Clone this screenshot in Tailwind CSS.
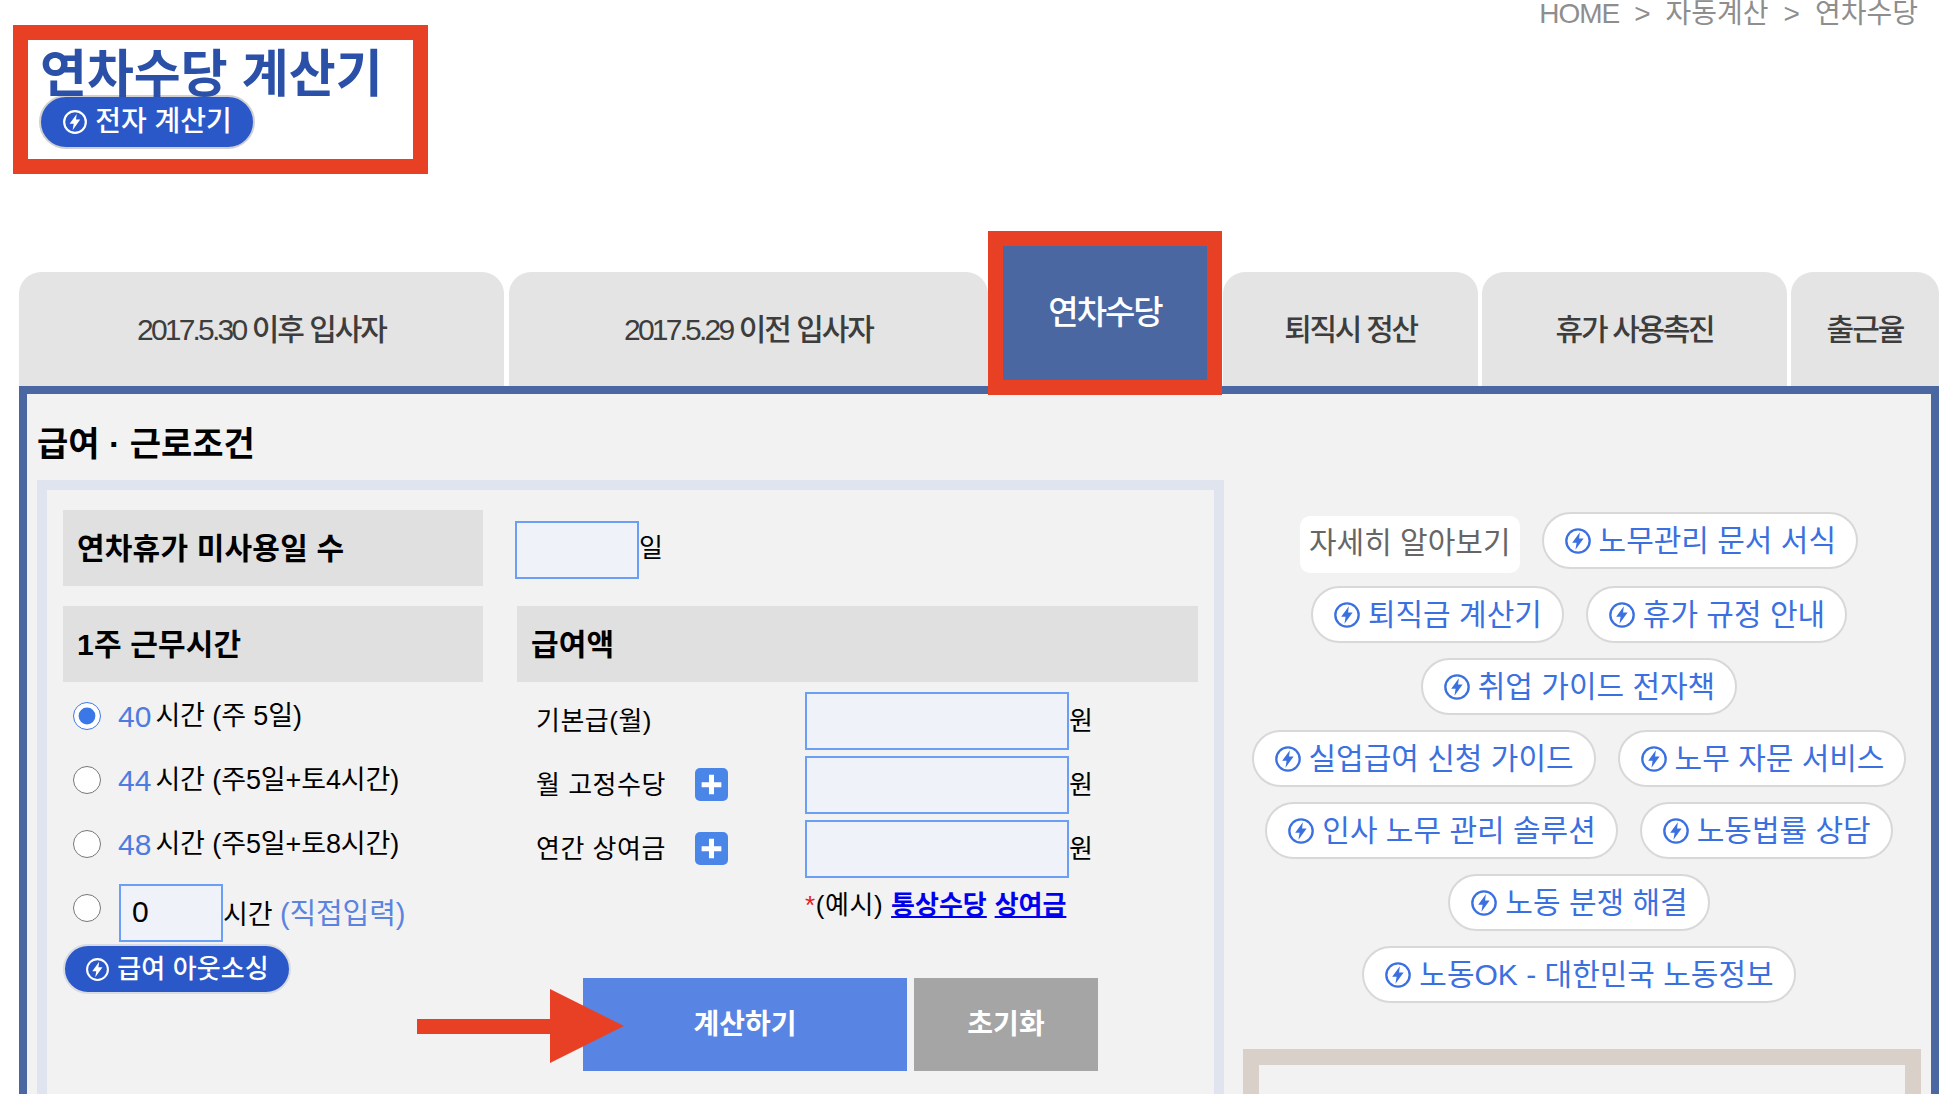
<!DOCTYPE html>
<html lang="ko">
<head>
<meta charset="utf-8">
<title>연차수당 계산기</title>
<script src="https://cdn.jsdelivr.net/npm/@tailwindcss/browser@4"></script>
</head>
<body class="w-[1956px] h-[1094px] overflow-hidden bg-white font-['Liberation_Sans','Noto_Sans_CJK_KR',sans-serif] text-black">

<svg class="hidden">
    <symbol id="bolt" viewBox="0 0 24 24">
        <circle cx="12" cy="12" r="10" fill="none" stroke="currentColor" stroke-width="2"/>
        <path fill="currentColor" d="M13.6 4.5 7 13.6h3.8l-1 5.9 7-9.7h-3.9z"/>
    </symbol>
</svg>

<!-- Header -->
<div class="flex justify-between items-start h-[231px]">
    <div class="ml-[13px] mt-[25px] w-[415px] h-[149px] border-[15px] border-[#e84024] pl-[12px] pt-[10px]">
        <h1 class="text-[51px] leading-[50px] font-bold text-[#2a50a8] tracking-normal whitespace-nowrap">연차수당 계산기</h1>
        <a class="-mt-[5px] -ml-px w-[216px] h-[54px] rounded-full bg-[#2b58c8] border-2 border-[#d0d0d0] text-white text-[28px] font-medium flex items-center justify-center gap-[7px]">
            <svg class="w-[26px] h-[26px]"><use href="#bolt"/></svg>전자 계산기
        </a>
    </div>
    <div class="flex items-center gap-[15px] pr-[38px] -mt-[4px] h-[36px] text-[28px] text-[#8e8e8e] whitespace-nowrap">
        <span class="tracking-[-1px]">HOME</span><span>&gt;</span><span>자동계산</span><span>&gt;</span><span>연차수당</span>
    </div>
</div>

<!-- Tabs -->
<div class="flex items-end h-[155px] ml-[19px] text-[30px] tracking-[-2px] text-[#3d3d3d] font-medium whitespace-nowrap">
    <div class="w-[485px] h-[114px] mr-[5px] rounded-t-[22px] bg-[#e4e4e4] flex items-center justify-center whitespace-pre"><span class="tracking-[-2.8px]">2017.5.30</span> 이후 입사자</div>
    <div class="w-[479px] h-[114px] rounded-t-[22px] bg-[#e4e4e4] flex items-center justify-center whitespace-pre"><span class="tracking-[-2.8px]">2017.5.29</span> 이전 입사자</div>
    <div class="relative z-10 w-[234px] h-[164px] -mb-[9px] border-[15px] border-[#e84024] bg-[#4a67a1] text-white text-[33px] flex items-center justify-center">연차수당</div>
    <div class="w-[255px] h-[114px] ml-px mr-[4px] rounded-t-[22px] bg-[#e4e4e4] flex items-center justify-center tracking-[-2.3px]">퇴직시 정산</div>
    <div class="w-[305px] h-[114px] mr-[4px] rounded-t-[22px] bg-[#e4e4e4] flex items-center justify-center tracking-[-2.3px]">휴가 사용촉진</div>
    <div class="w-[148px] h-[114px] rounded-t-[22px] bg-[#e4e4e4] flex items-center justify-center">출근율</div>
</div>

<!-- Panel -->
<div class="ml-[19px] w-[1920px] h-[800px] border-[8px] border-[#4a67a1] bg-[#f2f2f2]">
    <h2 class="h-[86px] pl-[10px] pt-[28px] text-[34px] leading-[44px] font-bold">급여 · 근로조건</h2>

    <div class="flex items-start">
        <!-- Form -->
        <div class="ml-[10px] w-[1187px] h-[700px] border-[10px] border-[#e0e4ef] pl-[16px] pt-[20px]">
            <div class="flex h-[76px] items-center">
                <div class="w-[420px] h-full bg-[#e0e0e0] pl-[14px] flex items-center text-[30px] tracking-[0.2px] font-bold">연차휴가 미사용일 수</div>
                <input type="text" class="ml-[32px] mt-[4px] w-[124px] h-[58px] border-2 border-[#6b9ef5] bg-[#eff2f8]">
                <span class="text-[26px]">일</span>
            </div>

            <div class="flex items-start mt-[20px]">
                <!-- Working hours -->
                <div class="w-[420px]">
                    <div class="h-[76px] bg-[#e0e0e0] pl-[14px] flex items-center text-[30px] tracking-[0.2px] font-bold">1주 근무시간</div>
                    <div class="mt-[2px] pl-[10px] text-[27px] tracking-[-0.1px] whitespace-nowrap">
                        <label class="flex items-center h-[64px]"><input type="radio" name="hours" checked class="w-[28px] h-[28px] m-0 accent-[#3b78e7]"><span class="ml-[17px] text-[#4f7be0] text-[30px] tracking-normal">40</span><span class="ml-[4px]">시간 (주 5일)</span></label>
                        <label class="flex items-center h-[64px]"><input type="radio" name="hours" class="w-[28px] h-[28px] m-0"><span class="ml-[17px] text-[#4f7be0] text-[30px] tracking-normal">44</span><span class="ml-[4px]">시간 (주5일+토4시간)</span></label>
                        <label class="flex items-center h-[64px]"><input type="radio" name="hours" class="w-[28px] h-[28px] m-0"><span class="ml-[17px] text-[#4f7be0] text-[30px] tracking-normal">48</span><span class="ml-[4px]">시간 (주5일+토8시간)</span></label>
                        <label class="flex items-start h-[68px] pt-[12px]">
                            <input type="radio" name="hours" class="w-[28px] h-[28px] m-0 mt-[6px]">
                            <input type="text" value="0" class="ml-[18px] w-[104px] h-[58px] -mt-[4px] border-2 border-[#6b9ef5] bg-[#eff2f8] pl-[11px] pb-[3px] text-[30px]">
                            <span class="mt-[5px]">시간 <span class="text-[#5b84e0] text-[29px]">(직접입력)</span></span>
                        </label>
                    </div>
                    <a class="mt-0 w-[228px] h-[50px] rounded-full bg-[#2b58c8] border-2 border-[#d8dbe2] text-white text-[26px] tracking-[0.1px] font-medium flex items-center justify-center gap-[7px] whitespace-nowrap">
                        <svg class="w-[25px] h-[25px]"><use href="#bolt"/></svg>급여 아웃소싱
                    </a>
                </div>

                <!-- Salary -->
                <div class="relative ml-[34px] w-[681px]">
                    <div class="h-[76px] bg-[#e0e0e0] pl-[14px] flex items-center text-[30px] tracking-[0.2px] font-bold">급여액</div>
                    <div class="mt-[10px] pl-[19px] flex flex-col gap-[6px] text-[26px] tracking-[0.5px]">
                        <div class="flex items-center h-[58px]">
                            <span class="w-[269px]">기본급(월)</span>
                            <input type="text" class="w-[264px] h-[58px] border-2 border-[#6b9ef5] bg-[#eff2f8]"><span>원</span>
                        </div>
                        <div class="flex items-center h-[58px]">
                            <span class="w-[159px]">월 고정수당</span>
                            <span class="w-[33px] h-[33px] -mt-[2px] mr-[77px] rounded-[5px] bg-[#4a86e8] flex items-center justify-center">
                                <svg class="w-[23px] h-[23px]" viewBox="0 0 21 21"><path fill="#fff" d="M8.2 1.5h4.6v7h6.7v4.5h-6.7v6.5H8.2V13H1.5V8.5h6.7z"/></svg>
                            </span>
                            <input type="text" class="w-[264px] h-[58px] border-2 border-[#6b9ef5] bg-[#eff2f8]"><span>원</span>
                        </div>
                        <div class="flex items-center h-[58px]">
                            <span class="w-[159px]">연간 상여금</span>
                            <span class="w-[33px] h-[33px] -mt-[2px] mr-[77px] rounded-[5px] bg-[#4a86e8] flex items-center justify-center">
                                <svg class="w-[23px] h-[23px]" viewBox="0 0 21 21"><path fill="#fff" d="M8.2 1.5h4.6v7h6.7v4.5h-6.7v6.5H8.2V13H1.5V8.5h6.7z"/></svg>
                            </span>
                            <input type="text" class="w-[264px] h-[58px] border-2 border-[#6b9ef5] bg-[#eff2f8]"><span>원</span>
                        </div>
                    </div>
                    <p class="mt-[7px] ml-[288px] h-[40px] leading-[40px] text-[26px] tracking-[0.6px] whitespace-nowrap"><span class="text-[#e02020]">*</span>(예시) <a class="font-bold text-[#0000ee] underline tracking-normal">통상수당</a> <a class="font-bold text-[#0000ee] underline tracking-normal">상여금</a></p>

                    <!-- Buttons -->
                    <div class="relative mt-[53px] ml-[66px] flex gap-[7px] text-white text-[28px] font-bold">
                        <button class="w-[324px] h-[93px] bg-[#5885e3]">계산하기</button>
                        <button class="w-[184px] h-[93px] bg-[#a5a5a5]">초기화</button>
                        <svg class="absolute -left-[166px] top-[11px] w-[207px] h-[74px]" viewBox="0 0 207 74"><path fill="#e84024" d="M0 30h133V0l74 37-74 37V45H0z"/></svg>
                    </div>
                </div>
            </div>
        </div>

        <!-- Links -->
        <div class="w-[698px] pl-[1px]">
            <div class="mt-[32px] pl-[11px] flex flex-col items-center gap-[15px] text-[30px] text-[#3b70e0] whitespace-nowrap">
                <div class="flex justify-center items-start gap-[22px] h-[59px]">
                    <span class="mt-[4px] h-[57px] pb-[5px] px-[9px] rounded-[10px] bg-white text-[#666] flex items-center">자세히 알아보기</span>
                    <a class="h-[57px] px-[20px] rounded-full bg-white border-2 border-[#d8d8d8] flex items-center gap-[7px]"><svg class="w-[28px] h-[28px]"><use href="#bolt"/></svg>노무관리 문서 서식</a>
                </div>
                <div class="flex justify-center gap-[22px]">
                    <a class="h-[57px] px-[20px] rounded-full bg-white border-2 border-[#d8d8d8] flex items-center gap-[7px]"><svg class="w-[28px] h-[28px]"><use href="#bolt"/></svg>퇴직금 계산기</a>
                    <a class="h-[57px] px-[20px] rounded-full bg-white border-2 border-[#d8d8d8] flex items-center gap-[7px]"><svg class="w-[28px] h-[28px]"><use href="#bolt"/></svg>휴가 규정 안내</a>
                </div>
                <div class="flex justify-center gap-[22px]">
                    <a class="h-[57px] px-[20px] rounded-full bg-white border-2 border-[#d8d8d8] flex items-center gap-[7px]"><svg class="w-[28px] h-[28px]"><use href="#bolt"/></svg>취업 가이드 전자책</a>
                </div>
                <div class="flex justify-center gap-[22px]">
                    <a class="h-[57px] px-[20px] rounded-full bg-white border-2 border-[#d8d8d8] flex items-center gap-[7px]"><svg class="w-[28px] h-[28px]"><use href="#bolt"/></svg>실업급여 신청 가이드</a>
                    <a class="h-[57px] px-[20px] rounded-full bg-white border-2 border-[#d8d8d8] flex items-center gap-[7px]"><svg class="w-[28px] h-[28px]"><use href="#bolt"/></svg>노무 자문 서비스</a>
                </div>
                <div class="flex justify-center gap-[22px]">
                    <a class="h-[57px] px-[20px] rounded-full bg-white border-2 border-[#d8d8d8] flex items-center gap-[7px]"><svg class="w-[28px] h-[28px]"><use href="#bolt"/></svg>인사 노무 관리 솔루션</a>
                    <a class="h-[57px] px-[20px] rounded-full bg-white border-2 border-[#d8d8d8] flex items-center gap-[7px]"><svg class="w-[28px] h-[28px]"><use href="#bolt"/></svg>노동법률 상담</a>
                </div>
                <div class="flex justify-center gap-[22px]">
                    <a class="h-[57px] px-[20px] rounded-full bg-white border-2 border-[#d8d8d8] flex items-center gap-[7px]"><svg class="w-[28px] h-[28px]"><use href="#bolt"/></svg>노동 분쟁 해결</a>
                </div>
                <div class="flex justify-center gap-[22px]">
                    <a class="h-[57px] px-[20px] rounded-full bg-white border-2 border-[#d8d8d8] flex items-center gap-[7px]"><svg class="w-[28px] h-[28px]"><use href="#bolt"/></svg>노동OK - 대한민국 노동정보</a>
                </div>
            </div>
            <div class="mt-[46px] ml-[18px] w-[678px] h-[200px] border-[16px] border-[#d8d0c9]"></div>
        </div>
    </div>
</div>

</body>
</html>
